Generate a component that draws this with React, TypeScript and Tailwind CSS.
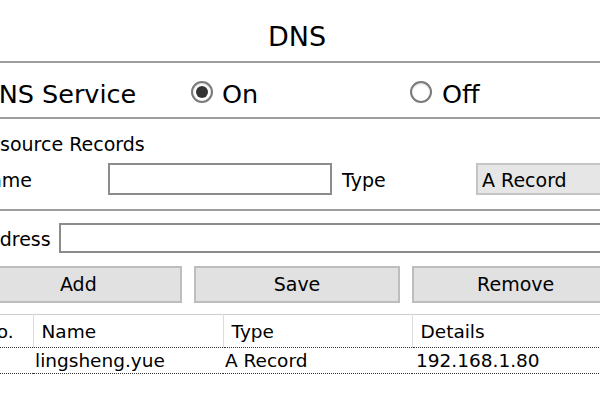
import React from "react";

function Radio({ checked }: { checked?: boolean }) {
  return (
    <span className="flex size-[22px] items-center justify-center rounded-full border-2 border-[#7a7a7a] bg-white shadow-[inset_0_1px_2px_rgba(0,0,0,.15)]">
      {checked && <span className="size-[12px] rounded-full bg-[#333]" />}
    </span>
  );
}

export default function App() {
  return (
    <div
      className="h-[400px] w-[600px] overflow-hidden bg-white text-black"
      style={{ fontFamily: '"DejaVu Sans", Verdana, sans-serif' }}
    >
      <div className="ml-[-25px] w-[644px]">
        <div className="flex h-[61px] items-center justify-center pt-[13px] text-[27px] leading-[30px]">DNS</div>
        <div className="h-[2px] bg-[#9e9e9e]" />

        <div className="flex h-[54px] items-center pl-[4px] pt-[8px] text-[25.5px] leading-[30px]">
          <span className="w-[212px]">DNS Service</span>
          <label className="flex w-[219px] items-center gap-[9px]">
            <span className="mb-[5px]">
              <Radio checked />
            </span>
            <span>On</span>
          </label>
          <label className="flex items-center gap-[10px]">
            <span className="mb-[5px]">
              <Radio />
            </span>
            <span>Off</span>
          </label>
        </div>
        <div className="h-[2px] bg-[#9e9e9e]" />

        <div className="pl-[1px] pt-[14px] text-[19px] leading-[22px]">Resource Records</div>
        <div className="mt-[8px] flex items-center pb-[14px] pl-[1px] text-[19px]">
          <span className="w-[132px] pt-[3px]">Name</span>
          <input className="h-[32px] w-[224px] border-2 border-[#8c8c8c] bg-white px-1 outline-none" />
          <span className="ml-[10px] w-[134px] pt-[3px]">Type</span>
          <div className="flex h-[32px] flex-1 items-center border-2 border-[#c4c4c4] bg-[#e6e6e6] px-[4px] pt-[3px] leading-none">
            A Record
          </div>
        </div>
        <div className="h-[2px] bg-[#9e9e9e]" />

        <div className="mt-[12px] flex items-center pl-0 text-[19px]">
          <span className="w-[84px] pt-[2px]">Address</span>
          <input className="h-[30px] flex-1 border-2 border-[#8c8c8c] bg-white px-1 outline-none" />
        </div>

        <div className="mt-[12px] grid grid-cols-3 gap-[12px] text-[19px]">
          {["Add", "Save", "Remove"].map((label) => (
            <button
              key={label}
              type="button"
              className="h-[37px] border-2 border-[#bdbdbd] bg-[#e1e1e1] text-black"
            >
              {label}
            </button>
          ))}
        </div>

        <table className="mt-[11px] w-full border-collapse text-left text-[18.5px]">
          <thead>
            <tr className="h-[33px] border-t border-b border-t-[#cfcfcf] border-b-[#333] border-dotted [border-top-style:solid]">
              <th className="w-[58px] px-[8px] pt-[2px] font-normal">No.</th>
              <th className="w-[190px] border-l border-[#dcdcdc] px-[8px] pt-[2px] font-normal">Name</th>
              <th className="w-[189px] border-l border-[#dcdcdc] px-[8px] pt-[2px] font-normal">Type</th>
              <th className="border-l border-[#dcdcdc] px-[8px] pt-[2px] font-normal">Details</th>
            </tr>
          </thead>
          <tbody>
            <tr className="h-[26px] border-b border-dotted border-[#333]">
              <td className="px-[8px] pt-[3px] leading-none">1</td>
              <td className="px-[2px] pt-[3px] leading-none">lingsheng.yue</td>
              <td className="px-[2px] pt-[3px] leading-none">A Record</td>
              <td className="px-[4px] pt-[3px] leading-none">192.168.1.80</td>
            </tr>
          </tbody>
        </table>
      </div>
    </div>
  );
}
